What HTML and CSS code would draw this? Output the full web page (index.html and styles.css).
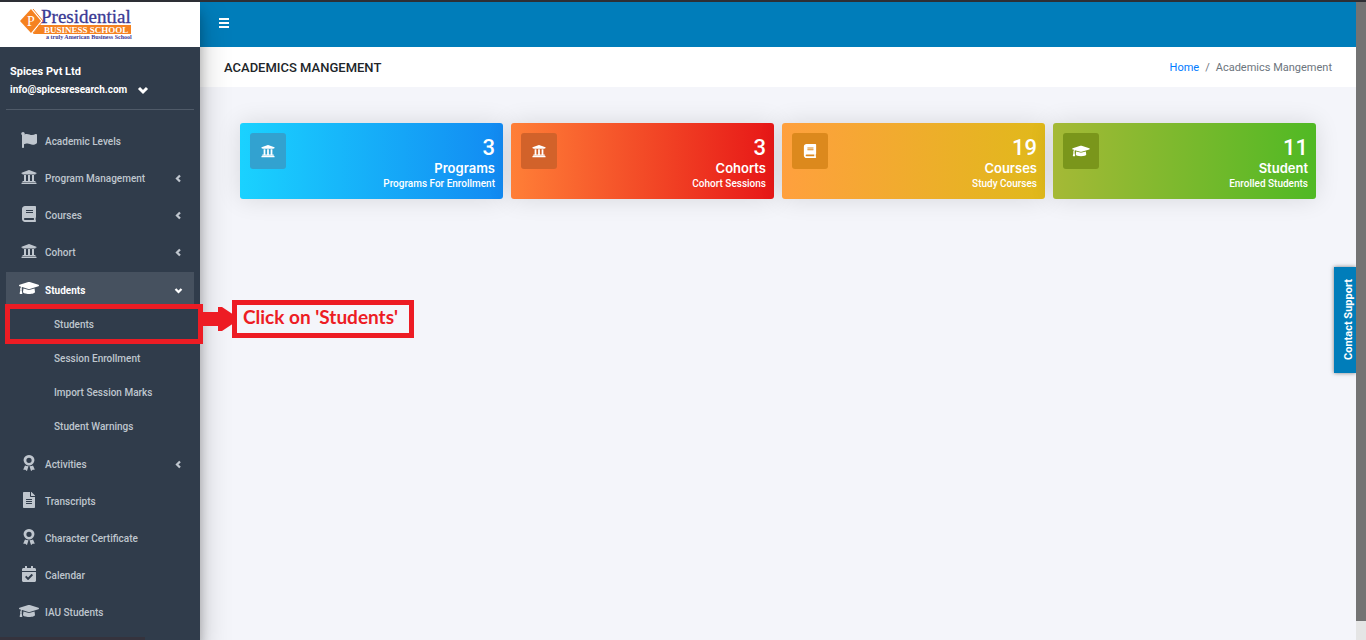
FILE: index.html
```html
<!DOCTYPE html>
<html lang="en">
<head>
    <meta charset="UTF-8">
    <meta name="viewport" content="width=device-width, initial-scale=1.0">
    <title>Academics Mangement</title>
    <link rel="stylesheet" href="styles.css">
</head>
<body>

<!-- Shared icons -->
<svg class="sprite" aria-hidden="true">
    <symbol id="flag" viewBox="0 0 512 512"><path d="M349.565 98.783C295.978 98.783 251.721 64 184.348 64c-24.955 0-47.309 4.384-68.045 12.013a55.947 55.947 0 0 0 3.586-23.562C118.117 24.015 94.806 1.206 66.338.048 34.345-1.254 8 24.296 8 56c0 19.026 9.497 35.825 24 45.945V488c0 13.255 10.745 24 24 24h16c13.255 0 24-10.745 24-24v-94.4c28.311-12.064 63.582-22.122 114.435-22.122 53.588 0 97.844 34.783 165.217 34.783 48.169 0 86.667-16.294 122.505-40.858C506.84 359.452 512 349.571 512 339.045v-243.1c0-23.393-24.269-38.87-45.485-29.016-34.338 15.948-76.454 31.854-116.95 31.854z"/></symbol>
    <symbol id="university" viewBox="0 0 512 512"><path d="M496 128v16a8 8 0 0 1-8 8h-24v12c0 6.627-5.373 12-12 12H60c-6.627 0-12-5.373-12-12v-12H24a8 8 0 0 1-8-8v-16a8 8 0 0 1 4.941-7.392l232-88a7.996 7.996 0 0 1 6.118 0l232 88A8 8 0 0 1 496 128zm-24 304H40c-13.255 0-24 10.745-24 24v16a8 8 0 0 0 8 8h464a8 8 0 0 0 8-8v-16c0-13.255-10.745-24-24-24zM96 192v192H60c-6.627 0-12 5.373-12 12v20h416v-20c0-6.627-5.373-12-12-12h-36V192h-64v192h-64V192h-64v192h-64V192H96z"/></symbol>
    <symbol id="book" viewBox="0 0 448 512"><path d="M448 360V24c0-13.3-10.7-24-24-24H96C43 0 0 43 0 96v320c0 53 43 96 96 96h328c13.3 0 24-10.7 24-24v-16c0-7.5-3.5-14.3-8.9-18.7-4.2-15.4-4.2-59.3 0-74.7 5.4-4.3 8.9-11.1 8.9-18.6zM128 134c0-3.3 2.7-6 6-6h212c3.3 0 6 2.7 6 6v20c0 3.3-2.7 6-6 6H134c-3.3 0-6-2.7-6-6v-20zm0 64c0-3.3 2.7-6 6-6h212c3.3 0 6 2.7 6 6v20c0 3.3-2.7 6-6 6H134c-3.3 0-6-2.7-6-6v-20zm253.4 250H96c-17.7 0-32-14.3-32-32 0-17.6 14.4-32 32-32h285.4c-1.9 17.1-1.9 46.9 0 64z"/></symbol>
    <symbol id="cap" viewBox="0 0 640 512"><path d="M622.34 153.2L343.4 67.5c-15.2-4.67-31.6-4.67-46.79 0L17.66 153.2c-23.54 7.23-23.54 38.36 0 45.59l48.63 14.94c-10.67 13.19-17.23 29.28-17.88 46.9C38.78 266.15 32 276.11 32 288c0 10.78 5.68 19.85 13.86 25.65L20.33 428.53C18.11 438.52 25.71 448 35.94 448h56.11c10.24 0 17.84-9.48 15.62-19.47L82.14 313.65C90.32 307.85 96 298.78 96 288c0-11.57-6.47-21.25-15.66-26.87.76-15.02 8.44-28.3 20.69-36.72L296.6 284.5c9.06 2.78 26.44 6.25 46.79 0l278.95-85.7c23.55-7.24 23.55-38.36 0-45.6zM352.79 315.09c-28.53 8.76-52.84 3.92-65.59 0l-145.02-44.55L128 384c0 35.35 85.96 64 192 64s192-28.65 192-64l-14.18-113.47-145.03 44.56z"/></symbol>
    <symbol id="award" viewBox="0 0 384 512"><path fill-rule="evenodd" d="M192 0l48 8 56 20 42 40 22 50 6 52-14 56-28 48-44 38-54 20-68 0-54-20-44-38-28-48-14-56 6-52 22-50 42-40 56-20zM192 84a84 84 0 1 0 0 168 84 84 0 1 0 0-168z"/><path d="M64 334l46 20 66 8-46 140q-6 12-18 4l-36-36-54 2q-14-2-10-16zM320 334l-46 20-66 8 46 140q6 12 18 4l36-36 54 2q14-2 10-16z"/></symbol>
    <symbol id="file" viewBox="0 0 384 512"><path d="M224 136V0H24C10.7 0 0 10.7 0 24v464c0 13.3 10.7 24 24 24h336c13.3 0 24-10.7 24-24V160H248c-13.2 0-24-10.8-24-24zm64 236c0 6.6-5.4 12-12 12H108c-6.6 0-12-5.4-12-12v-8c0-6.6 5.4-12 12-12h168c6.6 0 12 5.4 12 12v8zm0-64c0 6.6-5.4 12-12 12H108c-6.6 0-12-5.4-12-12v-8c0-6.6 5.4-12 12-12h168c6.6 0 12 5.4 12 12v8zm0-72v8c0 6.6-5.4 12-12 12H108c-6.6 0-12-5.4-12-12v-8c0-6.6 5.4-12 12-12h168c6.6 0 12 5.4 12 12zm96-114.1v6.1H256V0h6.1c6.4 0 12.5 2.5 17 7l97.9 98c4.5 4.5 7 10.6 7 16.9z"/></symbol>
    <symbol id="calendar" viewBox="0 0 448 512"><path d="M436 160H12c-6.627 0-12-5.373-12-12v-36c0-26.51 21.49-48 48-48h48V12c0-6.627 5.373-12 12-12h40c6.627 0 12 5.373 12 12v52h128V12c0-6.627 5.373-12 12-12h40c6.627 0 12 5.373 12 12v52h48c26.51 0 48 21.49 48 48v36c0 6.627-5.373 12-12 12zM12 192h424c6.627 0 12 5.373 12 12v260c0 26.51-21.49 48-48 48H48c-26.51 0-48-21.49-48-48V204c0-6.627 5.373-12 12-12zm333.296 95.947l-28.169-28.398c-4.667-4.705-12.265-4.736-16.97-.068L194.12 364.665l-45.98-46.352c-4.667-4.705-12.266-4.736-16.971-.068l-28.397 28.17c-4.705 4.667-4.736 12.265-.068 16.97l82.601 83.269c4.667 4.705 12.265 4.736 16.97.068l142.953-141.805c4.705-4.667 4.736-12.265.068-16.97z"/></symbol>
    <symbol id="bars" viewBox="0 0 12 12"><path d="M1 1h10v2H1zM1 5h10v2H1zM1 9h10v2H1z"/></symbol>
    <symbol id="down" viewBox="0 0 12 12"><path d="M2 4l4 4 4-4" fill="none" stroke="currentColor" stroke-width="3"/></symbol>
    <symbol id="left" viewBox="0 0 12 12"><path d="M8 2L4 6l4 4" fill="none" stroke="currentColor" stroke-width="3"/></symbol>
</svg>

<div class="page">
    <aside class="sidebar">
        <a class="brand" href="#" aria-label="Presidential Business School">
            <svg class="logo" viewBox="0 0 120 34">
                <path fill="#f58220" d="M12 2L1 14l11 12 10-12z"/>
                <path fill="none" stroke="#f58220" stroke-width="1" d="M14 2l10 12-10 12"/>
                <text class="logo-p" x="8" y="19">P</text>
                <path fill="#f58220" d="M20 18h92v9H14z"/>
                <text class="logo-name" x="22" y="16">Presidential</text>
                <text class="logo-sub" x="25" y="26">BUSINESS SCHOOL</text>
                <text class="logo-tag" x="27" y="32">a truly American Business School</text>
            </svg>
        </a>
        <div class="user">
            <div class="user-name">Spices Pvt Ltd</div>
            <button class="user-mail">info@spicesresearch.com <svg class="chevron big"><use href="#down"/></svg></button>
        </div>
        <nav>
            <ul class="menu">
                <li><a href="#"><svg class="icon"><use href="#flag"/></svg>Academic Levels</a></li>
                <li><a href="#"><svg class="icon"><use href="#university"/></svg>Program Management<svg class="chevron"><use href="#left"/></svg></a></li>
                <li><a href="#"><svg class="icon"><use href="#book"/></svg>Courses<svg class="chevron"><use href="#left"/></svg></a></li>
                <li><a href="#"><svg class="icon"><use href="#university"/></svg>Cohort<svg class="chevron"><use href="#left"/></svg></a></li>
                <li class="open">
                    <a href="#"><svg class="icon"><use href="#cap"/></svg>Students<svg class="chevron"><use href="#down"/></svg></a>
                    <ul class="submenu">
                        <li class="marked">
                            <a href="#">Students</a>
                            <div class="hint">
                                <svg class="arrow" viewBox="0 0 36 26"><path d="M0 6h16V1h4l12 8 2 4-2 4-12 8h-4v-5H0z"/></svg>
                                <div class="hint-text">Click on 'Students'</div>
                            </div>
                        </li>
                        <li><a href="#">Session Enrollment</a></li>
                        <li><a href="#">Import Session Marks</a></li>
                        <li><a href="#">Student Warnings</a></li>
                    </ul>
                </li>
                <li><a href="#"><svg class="icon"><use href="#award"/></svg>Activities<svg class="chevron"><use href="#left"/></svg></a></li>
                <li><a href="#"><svg class="icon"><use href="#file"/></svg>Transcripts</a></li>
                <li><a href="#"><svg class="icon"><use href="#award"/></svg>Character Certificate</a></li>
                <li><a href="#"><svg class="icon"><use href="#calendar"/></svg>Calendar</a></li>
                <li><a href="#"><svg class="icon"><use href="#cap"/></svg>IAU Students</a></li>
            </ul>
        </nav>
    </aside>

    <div class="main">
        <header class="topbar">
            <button class="toggle" aria-label="Toggle menu"><svg><use href="#bars"/></svg></button>
        </header>
        <div class="heading">
            <h1>ACADEMICS MANGEMENT</h1>
            <div class="breadcrumb"><a href="#">Home</a><span>/</span><span>Academics Mangement</span></div>
        </div>
        <main class="cards">
            <div class="card blue">
                <div class="card-icon"><svg><use href="#university"/></svg></div>
                <div class="card-info">
                    <div class="count">3</div>
                    <h2>Programs</h2>
                    <p>Programs For Enrollment</p>
                </div>
            </div>
            <div class="card red">
                <div class="card-icon"><svg><use href="#university"/></svg></div>
                <div class="card-info">
                    <div class="count">3</div>
                    <h2>Cohorts</h2>
                    <p>Cohort Sessions</p>
                </div>
            </div>
            <div class="card yellow">
                <div class="card-icon"><svg><use href="#book"/></svg></div>
                <div class="card-info">
                    <div class="count">19</div>
                    <h2>Courses</h2>
                    <p>Study Courses</p>
                </div>
            </div>
            <div class="card green">
                <div class="card-icon"><svg><use href="#cap"/></svg></div>
                <div class="card-info">
                    <div class="count">11</div>
                    <h2>Student</h2>
                    <p>Enrolled Students</p>
                </div>
            </div>
        </main>
        <button class="support">Contact Support</button>
    </div>
    <div class="scroll"><div class="thumb"></div></div>
</div>

</body>
</html>
```
FILE: styles.css
```css
* {
    box-sizing: border-box;
}

body {
    font-family: Roboto, "Open Sans", sans-serif;
    font-size: 11px;
    margin: 0;
    background-color: #f4f5fa;
    color: #212529;
}

a {
    text-decoration: none;
    color: inherit;
}

button {
    border: none;
    background: none;
    padding: 0;
    font: inherit;
    color: inherit;
    cursor: pointer;
}

ul, h1, h2, p {
    margin: 0;
    padding: 0;
    list-style: none;
}

svg {
    display: block;
    fill: currentColor;
}

.sprite {
    position: absolute;
    width: 0;
    height: 0;
}

.page {
    display: flex;
    height: 100vh;
    overflow: hidden;
    border-top: 2px solid #2d2f35;
}

/* Sidebar */
.sidebar {
    position: relative;
    z-index: 2;
    flex: 0 0 200px;
    background-color: #303c4b;
    color: #bfc6ce;
    box-shadow: 0 14px 28px rgba(0, 0, 0, 0.25), 0 10px 10px rgba(0, 0, 0, 0.22);
}

.sidebar::after {
    content: "";
    position: absolute;
    left: 0;
    bottom: 0;
    width: 145px;
    height: 3px;
    background-color: #35333d;
}

.brand {
    display: block;
    height: 45px;
    padding: 5px 19px;
    background-color: #fff;
}

.logo {
    width: 120px;
    height: 34px;
}

.logo text {
    font-family: "Liberation Serif", serif;
}

.logo .logo-p {
    font-size: 14px;
    fill: #fff;
}

.logo .logo-name {
    font-size: 19px;
    fill: #3b3a94;
    stroke: #3b3a94;
    stroke-width: 0.3;
}

.logo .logo-sub {
    font-size: 9px;
    font-weight: bold;
    fill: #fff;
}

.logo .logo-tag {
    font-size: 6px;
    font-weight: bold;
    fill: #3b3a94;
}

.user {
    margin: 0 6px 12px;
    height: 63px;
    padding: 16px 4px 0;
    border-bottom: 1px solid #4f5a68;
    color: #fff;
    font-weight: bold;
    line-height: 18px;
}

.user-mail {
    display: flex;
    align-items: center;
    gap: 10px;
    font-size: 10px;
    line-height: 18px;
}

.menu {
    padding: 0 6px;
    font-size: 10px;
    font-weight: 500;
}

.menu a {
    display: flex;
    align-items: center;
    height: 37px;
    padding: 2px 11px 0 13px;
}

.icon {
    width: 20px;
    height: 16px;
    margin-right: 6px;
    margin-bottom: 4px;
}

.chevron {
    width: 9px;
    height: 9px;
    margin-left: auto;
}

.chevron.big {
    width: 12px;
    height: 12px;
}

.menu .open {
    margin: 2px 0 3px;
}

.menu .open > a {
    height: 34px;
    background-color: #46515f;
    color: #fff;
    font-weight: bold;
}

.submenu a {
    height: 34px;
    padding-left: 48px;
}

/* Highlighted item with its hint */
.marked {
    position: relative;
}

.marked::before {
    content: "";
    position: absolute;
    inset: -2px -9px -4px -1px;
    border: 5px solid #ed1c24;
    pointer-events: none;
}

.hint {
    position: absolute;
    left: 196px;
    top: -6px;
    display: flex;
    align-items: center;
}

.arrow {
    flex: none;
    width: 36px;
    height: 26px;
    margin-right: -6px;
    position: relative;
    z-index: 1;
    fill: #ed1c24;
}

.hint-text {
    width: 182px;
    height: 38px;
    padding-left: 6px;
    border: 5px solid #ed1c24;
    background-color: #f4f5fa;
    color: #ed1c24;
    font-family: Lato, sans-serif;
    font-size: 19px;
    font-weight: bold;
    line-height: 23px;
    white-space: nowrap;
}

/* Content */
.main {
    position: relative;
    flex: 1;
    min-width: 0;
}

.topbar {
    display: flex;
    align-items: center;
    height: 45px;
    padding: 0 18px 4px;
    background-color: #007dba;
    color: #fff;
}

.toggle svg {
    width: 12px;
    height: 12px;
}

.heading {
    display: flex;
    align-items: center;
    justify-content: space-between;
    height: 40px;
    padding: 0 24px;
    background-color: #fff;
}

.heading h1 {
    font-size: 13px;
    font-weight: 500;
}

.breadcrumb {
    display: flex;
    gap: 6px;
    color: #6c757d;
}

.breadcrumb a {
    color: #007bff;
}

.cards {
    display: grid;
    grid-template-columns: repeat(4, 1fr);
    gap: 8px;
    padding: 36px 40px;
}

.card {
    display: flex;
    justify-content: space-between;
    height: 76px;
    padding: 10px 8px 0 10px;
    border-radius: 3px;
    color: #fff;
    box-shadow: 0 0 25px rgba(0, 0, 0, 0.12);
}

.card-icon {
    display: flex;
    align-items: center;
    justify-content: center;
    width: 36px;
    height: 36px;
    border-radius: 3px;
}

.card-icon svg {
    width: 18px;
    height: 14px;
}

.card-info {
    text-align: right;
}

.count {
    padding-top: 1px;
    font-size: 22px;
    font-weight: 500;
    line-height: 27px;
}

.card h2 {
    font-family: Inter, sans-serif;
    font-size: 13px;
    font-weight: 600;
    line-height: 14px;
}

.card p {
    font-size: 10px;
    font-weight: 500;
    line-height: 18px;
}

.blue {
    background: linear-gradient(to right, #1ad2ff, #128af2);
}

.blue .card-icon {
    background-color: #32a2d0;
}

.red {
    background: linear-gradient(to right, #ff7f37, #e71717);
}

.red .card-icon {
    background-color: #d2622a;
}

.yellow {
    background: linear-gradient(to right, #ffa03e, #e0b91b);
}

.yellow .card-icon {
    background-color: #dc891d;
}

.green {
    background: linear-gradient(to right, #a5b936, #50b924);
}

.green .card-icon {
    background-color: #7a961b;
}

.support {
    position: absolute;
    right: 0;
    top: 265px;
    width: 22px;
    height: 106px;
    padding-right: 8px;
    background-color: #007dba;
    color: #fff;
    font-weight: bold;
    line-height: 14px;
    writing-mode: vertical-rl;
    transform: rotate(180deg);
    box-shadow: 0 0 4px rgba(0, 0, 0, 0.5);
}

.scroll {
    flex: 0 0 10px;
    background-color: #e5e5e5;
    z-index: 1;
}

.thumb {
    height: 97%;
    background-color: #737373;
}
```
